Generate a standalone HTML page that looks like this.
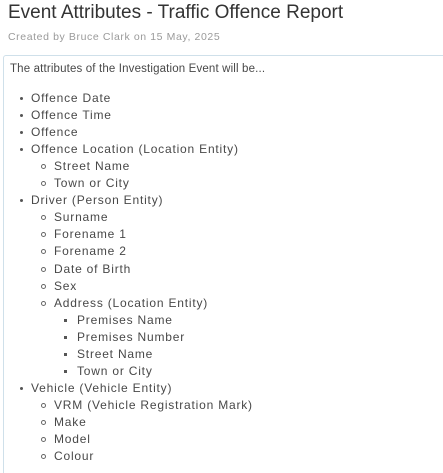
<!DOCTYPE html>
<html><head><style>
html,body{margin:0;width:443px;height:473px;overflow:hidden}
body{background:#fff;font-family:"Liberation Sans",sans-serif;color:#484848;position:relative}
.t{position:absolute;left:8px;top:2px;font-size:19px;color:#333;white-space:nowrap}
.s{position:absolute;left:8px;top:31px;font-size:10.5px;color:#9a9a9a;letter-spacing:0.6px}
.box{position:absolute;left:3px;top:55px;width:460px;height:425px;border:1px solid #cfe0ea;border-radius:3px}
.l{position:absolute;font-size:12px;white-space:nowrap;line-height:14px;letter-spacing:0.8px}
.b{position:absolute;width:3px;height:3px;background:#555}
.c{position:absolute;width:3px;height:3px;border:1px solid #666;border-radius:50%}
.q{position:absolute;width:3px;height:3px;background:#555}
</style></head><body>
<div class="t">Event Attributes - Traffic Offence Report</div>
<div class="s">Created by Bruce Clark on 15 May, 2025</div>
<div class="box"></div>
<div class="l" style="left:10px;top:62px;font-size:11.5px;letter-spacing:0.15px">The attributes of the Investigation Event will be...</div>
<div id="x"></div>
<script>
var items=[[1,"Offence Date"],[1,"Offence Time"],[1,"Offence"],[1,"Offence Location (Location Entity)"],[2,"Street Name"],[2,"Town or City"],[1,"Driver (Person Entity)"],[2,"Surname"],[2,"Forename 1"],[2,"Forename 2"],[2,"Date of Birth"],[2,"Sex"],[2,"Address (Location Entity)"],[3,"Premises Name"],[3,"Premises Number"],[3,"Street Name"],[3,"Town or City"],[1,"Vehicle (Vehicle Entity)"],[2,"VRM (Vehicle Registration Mark)"],[2,"Make"],[2,"Model"],[2,"Colour"]];
var h="";
items.forEach(function(it,i){
var y=98+i*17.05;var lv=it[0];
var bx=[0,20,41,64][lv],tx=[0,31,54,77][lv];
if(lv==1)h+='<div class="b" style="left:'+bx+'px;top:'+(y-1)+'px;border-radius:50%"></div>';
if(lv==2)h+='<div class="c" style="left:'+bx+'px;top:'+(y-2)+'px"></div>';
if(lv==3)h+='<div class="q" style="left:'+bx+'px;top:'+(y-1)+'px"></div>';
h+='<div class="l" style="left:'+tx+'px;top:'+(y-7)+'px">'+it[1]+'</div>';
});
document.getElementById("x").innerHTML=h;
</script>
</body></html>
